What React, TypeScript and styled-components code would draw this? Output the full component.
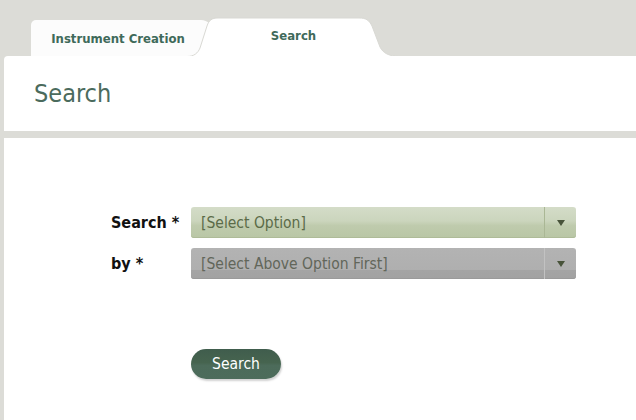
import styled, { createGlobalStyle } from "styled-components";

const GlobalStyle = createGlobalStyle`
    html, body {
        margin: 0;
        padding: 0;
        background: #dcdcd7;
        font-family: "DejaVu Sans Condensed", "DejaVu Sans", sans-serif;
        font-stretch: condensed;
    }
`;

const Page = styled.div`
    width: 636px;
    height: 420px;
    overflow: hidden;
    background: #dcdcd7;
`;

const TabBar = styled.div`
    display: flex;
    align-items: flex-end;
    height: 56px;
    padding-left: 31px;
`;

const Tab = styled.div<{ $active?: boolean }>`
    position: relative;
    display: flex;
    align-items: center;
    justify-content: center;
    box-sizing: border-box;
    height: ${(p) => (p.$active ? "39px" : "36px")};
    width: ${(p) => (p.$active ? "213px" : "182px")};
    margin-left: ${(p) => (p.$active ? "-26px" : "0")};
    padding-right: ${(p) => (p.$active ? "0" : "8px")};
    padding-bottom: ${(p) => (p.$active ? "2px" : "0")};
    background: ${(p) => (p.$active ? "transparent" : "#fcfcfc")};
    border-radius: 5px 12px 0 0;
    z-index: ${(p) => (p.$active ? 2 : 1)};
    color: #3f6a5a;
    font-size: 13px;
    font-weight: bold;
    cursor: pointer;
`;

const TabShape = styled.svg`
    position: absolute;
    inset: 0;
    z-index: -1;
`;

const Panel = styled.div`
    display: flex;
    flex-direction: column;
    gap: 7px;
    margin-left: 4px;
`;

const Header = styled.div`
    display: flex;
    align-items: center;
    height: 75px;
    padding-left: 30px;
    background: #fff;
    border-radius: 4px 0 0 0;
`;

const Title = styled.h1`
    margin: 0;
    font-size: 25px;
    font-weight: normal;
    color: #4b6b5d;
`;

const Body = styled.div`
    background: #fff;
    height: 290px;
    padding: 69px 0 0 107px;
    box-sizing: border-box;
`;

const Form = styled.div`
    display: grid;
    grid-template-columns: 80px 385px;
    row-gap: 10px;
    align-items: center;
`;

const Label = styled.label`
    font-size: 16px;
    font-weight: bold;
    color: #111;
`;

const Select = styled.div<{ $disabled?: boolean }>`
    display: flex;
    align-items: stretch;
    height: 31px;
    border-radius: 3px;
    box-sizing: border-box;
    overflow: hidden;
    cursor: pointer;
    background: ${(p) =>
        p.$disabled
            ? "linear-gradient(#b3b3b3 0%, #afafaf 70%, #a4a4a4 72%, #a2a2a2 100%)"
            : "linear-gradient(#d4dcc8 0%, #cbd5bd 45%, #bfcbad 60%, #b9c6a5 100%)"};
    box-shadow: inset 0 -1px 0 ${(p) => (p.$disabled ? "#9a9a9a" : "#aebb98")};
`;

const SelectText = styled.span<{ $disabled?: boolean }>`
    flex: 1;
    display: flex;
    align-items: center;
    padding-left: 10px;
    font-size: 15.5px;
    color: ${(p) => (p.$disabled ? "#62665a" : "#5b6b48")};
`;

const Arrow = styled.span<{ $disabled?: boolean }>`
    display: flex;
    align-items: center;
    justify-content: center;
    width: 31px;
    border-left: 1px solid ${(p) => (p.$disabled ? "#c2c2c2" : "#aab795")};

    &::after {
        content: "";
        border-left: 4.5px solid transparent;
        border-right: 4.5px solid transparent;
        border-top: 6px solid #48533a;
    }
`;

const ButtonRow = styled.div`
    padding: 70px 0 0 80px;
`;

const Button = styled.button`
    width: 90px;
    height: 30px;
    border: none;
    border-radius: 15px;
    background: linear-gradient(#405d4d 0%, #46644f 45%, #4c6b5a 55%, #4d6c5b 100%);
    box-shadow: 1px 2px 2px #d2d2d2;
    color: #fff;
    font-family: inherit;
    font-size: 15.5px;
    cursor: pointer;
`;

function App() {
    return (
        <Page>
            <GlobalStyle />
            <TabBar>
                <Tab>Instrument Creation</Tab>
                <Tab $active>
                    <TabShape width="213" height="39" viewBox="0 0 213 39">
                        <path
                            d="M0 39.5 C 7 39.5, 11 36, 13 31 L 20 9 C 22 3, 25 1, 31 1 L 172 1 C 179 1, 182 3, 185 9 L 193 30 C 196 36, 202 39.5, 213 39.5"
                            fill="#fff"
                            stroke="#d9d9d4"
                            strokeWidth="1"
                        />
                    </TabShape>
                    Search
                </Tab>
            </TabBar>
            <Panel>
                <Header>
                    <Title>Search</Title>
                </Header>
                <Body>
                    <Form>
                        <Label>Search *</Label>
                        <Select>
                            <SelectText>[Select Option]</SelectText>
                            <Arrow />
                        </Select>
                        <Label>by *</Label>
                        <Select $disabled>
                            <SelectText $disabled>[Select Above Option First]</SelectText>
                            <Arrow $disabled />
                        </Select>
                    </Form>
                    <ButtonRow>
                        <Button>Search</Button>
                    </ButtonRow>
                </Body>
            </Panel>
        </Page>
    );
}

export default App;
